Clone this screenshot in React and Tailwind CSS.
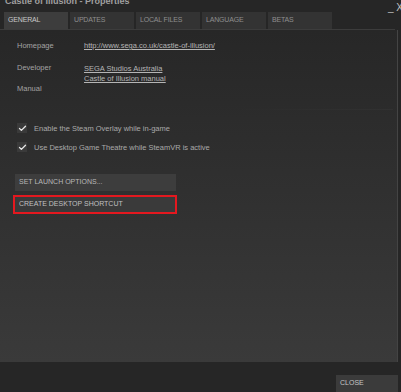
import { Check } from 'lucide-react';

const tabs = ['GENERAL', 'UPDATES', 'LOCAL FILES', 'LANGUAGE', 'BETAS'];

function Tab({ label, active }) {
  return (
    <div
      className={
        'w-[64px] h-[17px] flex items-center pl-[4px] text-[7px] tracking-tight ' +
        (active ? 'bg-[#3d3d3d] text-[#c8c8c8]' : 'bg-[#333333] text-[#8e8e8e]')
      }
    >
      {label}
    </div>
  );
}

function CheckRow({ label }) {
  return (
    <div className="flex items-center gap-[7px]">
      <div className="w-[10px] h-[10px] bg-[#3a3a3a] flex items-center justify-center">
        <Check size={9} strokeWidth={3.5} color="#e8e8e8" />
      </div>
      <span className="text-[7.5px] text-[#a9a9a9]">{label}</span>
    </div>
  );
}

export default function App() {
  return (
    <div
      className="w-[401px] h-[392px] bg-[#262626] overflow-hidden flex flex-col"
      style={{ fontFamily: '"Liberation Sans", Arial, sans-serif' }}
    >
      {/* title bar */}
      <div className="h-[12px] flex justify-between items-start">
        <span className="ml-[5px] -mt-[5px] text-[9px] font-bold text-[#a0a0a0]">Castle of Illusion - Properties</span>
        <span className="mt-[3px] mr-[-2px] text-[10px] text-[#c0c0c0] leading-none">_ X</span>
      </div>

      {/* tabs */}
      <div className="flex gap-[2px] pl-[4px]">
        {tabs.map((t, i) => (
          <Tab key={t} label={t} active={i === 0} />
        ))}
      </div>
      <div className="h-[1px] mr-[6px] bg-[#3c3c3c]" />

      {/* content panel */}
      <div className="flex-1 mr-[3px] bg-gradient-to-b from-[#272727] to-[#3a3a3a] border-r border-[#444] flex flex-col">
        <div className="pl-[17px] pt-[10px] text-[7.5px] text-[#a3a3a3]">
          <div className="flex">
            <span className="w-[67px]">Homepage</span>
            <span className="text-[#b5b5b5] underline">http://www.sega.co.uk/castle-of-illusion/</span>
          </div>
          <div className="flex mt-[11px]">
            <span className="w-[67px]">Developer</span>
            <div className="flex flex-col mt-[2px] text-[#b5b5b5] underline leading-[10px]">
              <span>SEGA Studios Australia</span>
              <span>Castle of Illusion manual</span>
            </div>
          </div>
          <div className="-mt-[1px]">Manual</div>
        </div>

        <div className="h-[1px] mt-[14px] ml-[230px] mr-[4px] bg-gradient-to-r from-transparent to-[#313131]" />

        <div className="pl-[17px] mt-[13px] flex flex-col gap-[8px]">
          <CheckRow label="Enable the Steam Overlay while in-game" />
          <CheckRow label="Use Desktop Game Theatre while SteamVR is active" />
        </div>

        <div className="ml-[15px] mt-[21px] w-[161px] flex flex-col gap-[4px]">
          <div className="h-[17px] bg-[#3d3d3d] flex items-center pl-[4px] text-[7px] text-[#b8b8b8]">
            SET LAUNCH OPTIONS...
          </div>
          <div className="-ml-[2px] w-[164px] h-[19px] border-2 border-[#e4181f] bg-[#3a3a3a] flex items-center pl-[4px] text-[7px] text-[#c0c0c0]">
            CREATE DESKTOP SHORTCUT
          </div>
        </div>
      </div>

      {/* footer */}
      <div className="h-[30px] flex justify-end items-end">
        <div className="w-[62px] h-[17px] mr-[3px] bg-[#3b3b3b] flex items-center pl-[4px] text-[7px] text-[#c6c6c6]">
          CLOSE
        </div>
      </div>
    </div>
  );
}
